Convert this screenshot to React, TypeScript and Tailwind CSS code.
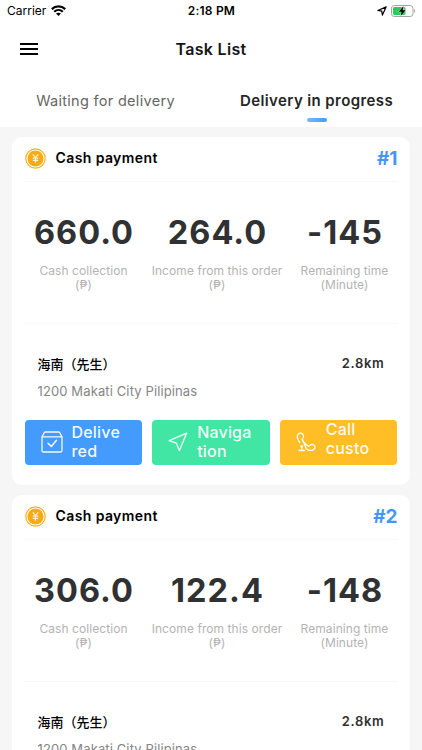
import type { ReactNode } from "react";

type Task = {
  id: number;
  collection: string;
  income: string;
  remaining: string;
};

const tasks: Task[] = [
  { id: 1, collection: "660.0", income: "264.0", remaining: "-145" },
  { id: 2, collection: "306.0", income: "122.4", remaining: "-148" },
];

function StatusBar() {
  return (
    <div className="grid h-[22px] grid-cols-3 items-center pl-[7px] pr-[6px] text-[12px] leading-[22px] text-black">
      <div className="flex items-center gap-[5px]">
        <span>Carrier</span>
        <svg className="h-[11px] w-[15px] -translate-y-px" viewBox="0 0 15 11" fill="none" stroke="currentColor" strokeWidth="2.2">
          <path d="M0.8 4.1C4.6 0.4 10.4 0.4 14.2 4.1" />
          <path d="M3.2 6.7C5.7 4.4 9.3 4.4 11.8 6.7" />
          <path d="M7.5 11L5 8.6C6.4 7.4 8.6 7.4 10 8.6Z" fill="currentColor" stroke="none" />
        </svg>
      </div>
      <span className="text-center font-semibold tracking-[0.2px]">2:18 PM</span>
      <div className="flex items-center justify-end gap-1">
        <svg className="h-[10px] w-[10px]" viewBox="0 0 10 10" fill="none" stroke="currentColor" strokeWidth="1.2" strokeLinejoin="round">
          <path d="M9.1 0.9L0.9 4.5L4.8 5.2L5.4 9.1Z" />
        </svg>
        <svg className="h-[12px] w-[25px]" viewBox="0 0 25 12" fill="none">
          <rect x="0.5" y="0.5" width="21.5" height="11" rx="2.8" stroke="#a3a3a3" />
          <rect x="2" y="2" width="12.5" height="8" rx="1.5" fill="#35c759" />
          <path d="M23.2 4V8C24.6 7.4 24.6 4.6 23.2 4Z" fill="#a3a3a3" />
          <path d="M12.6 1.1L7.6 6.7H10.6L9.6 10.9L14.7 5.2H11.6Z" fill="#000" stroke="#fff" strokeWidth="0.8" paintOrder="stroke" />
        </svg>
      </div>
    </div>
  );
}

function CoinIcon() {
  return (
    <svg className="h-[21px] w-[21px]" viewBox="0 0 21 21" fill="none">
      <circle cx="10.5" cy="10.5" r="9.7" stroke="#fbb01c" strokeWidth="1.2" />
      <circle cx="10.5" cy="10.5" r="8" fill="#fbab12" />
      <path d="M7.8 6.3L10.5 9.6L13.2 6.3M10.5 9.6V14.8M7.8 10.2H13.2M7.8 12.3H13.2" stroke="#fff3d6" strokeWidth="1.2" />
    </svg>
  );
}

function BoxIcon() {
  return (
    <svg className="h-[22px] w-[22px]" viewBox="0 0 22 22" fill="none" stroke="currentColor" strokeWidth="1.3" strokeLinecap="round" strokeLinejoin="round">
      <path d="M1 5.8L3.4 1.5Q3.7 1 4.3 1H17.7Q18.3 1 18.6 1.5L21 5.8V19.5Q21 21 19.5 21H2.5Q1 21 1 19.5ZM1 5.8H21" />
      <path d="M7 12.2L10.3 15.4L15.5 9.2" strokeWidth="1.5" />
    </svg>
  );
}

function NavigateIcon() {
  return (
    <svg className="h-[20px] w-[20px]" viewBox="0 0 20 20" fill="none" stroke="currentColor" strokeWidth="1.3" strokeLinejoin="round">
      <path d="M18.6 1.2L1.2 8.6L8.3 11.2L11.4 18.6Z" />
    </svg>
  );
}

function CallIcon() {
  return (
    <svg className="h-[20px] w-[20px]" viewBox="0 0 20 20" fill="none" stroke="currentColor" strokeWidth="1.3" strokeLinecap="round" strokeLinejoin="round">
      <path d="M6.3 7C8.6 5 7.4 1 4.6 1C1.7 1 0.8 3.9 1.5 6.2C1.9 7.8 2.7 9.2 3.7 10.6M10.3 17C14 19.6 18.8 18.4 19 15.2C19.1 12.4 15.4 11.6 13.8 13.6C12.9 14.7 12 14.1 10.5 12.7C8.2 10.6 5.2 8.2 6.3 7Z" />
      <path d="M3 18.5H8.4M5.7 18.3V15.4" />
      <circle cx="5.7" cy="14.4" r="1.3" fill="currentColor" stroke="none" />
    </svg>
  );
}

function Stat({ value, label, unit, className }: { value: string; label: string; unit: string; className: string }) {
  return (
    <div className={`flex flex-col items-center whitespace-nowrap ${className}`}>
      <span className="pl-px text-[32.5px] font-bold leading-10 tracking-[1px] text-[#303132]">{value}</span>
      <span className="mt-[11px] text-[12px] leading-[14px] tracking-[0.07px] text-[#b3b3b3]">{label}</span>
      <span className="text-[12px] leading-[14px] tracking-[0.07px] text-[#b3b3b3]">{unit}</span>
    </div>
  );
}

function ActionButton({ icon, className, children }: { icon: ReactNode; className: string; children: ReactNode }) {
  return (
    <button className={`flex h-[45px] items-center overflow-hidden rounded-[4px] text-left text-[16px] font-medium leading-[19.5px] tracking-[0.2px] text-white/95 ${className}`}>
      {icon}
      {children}
    </button>
  );
}

function TaskCard({ task }: { task: Task }) {
  return (
    <article className="h-[348px] shrink-0 rounded-[10px] bg-white px-[12.5px]">
      <header className="flex h-[44.5px] items-center border-b border-[#f8f8f8]">
        <CoinIcon />
        <h2 className="ml-[10px] -translate-y-px text-[14px] font-semibold tracking-[0.4px] text-black">Cash payment</h2>
        <span className="ml-auto text-[19px] font-bold text-[#4597f7]">#{task.id}</span>
      </header>
      <div className="flex h-[142px] border-b border-[#f8f8f8] pt-[31px]">
        <Stat value={task.collection} label="Cash collection" unit="(₱)" className="w-[118px]" />
        <Stat value={task.income} label="Income from this order" unit="(₱)" className="w-[149px]" />
        <Stat value={task.remaining} label="Remaining time" unit="(Minute)" className="w-[106px]" />
      </div>
      <div className="flex h-[96px] justify-between px-[13px] pt-[30px]">
        <div>
          <p className="text-[13px] font-medium leading-5 text-black">海南（先生）</p>
          <p className="mt-[7px] text-[13px] leading-5 tracking-[0.12px] text-[#858585]">1200 Makati City Pilipinas</p>
        </div>
        <span className="text-[13px] font-semibold leading-[19px] tracking-[0.7px] text-[#303132]">2.8km</span>
      </div>
      <div className="grid grid-cols-3 gap-[10px]">
        <ActionButton icon={<BoxIcon />} className="gap-[9px] bg-[#439bfd] pl-4">
          <span>Delive<br />red</span>
        </ActionButton>
        <ActionButton icon={<NavigateIcon />} className="gap-[9px] bg-[#42e6a4] pl-4">
          <span>Naviga<br />tion</span>
        </ActionButton>
        <ActionButton icon={<CallIcon />} className="gap-[10px] bg-[#ffbe26] pl-4">
          <span className="-mt-1.5">Call<br />custo</span>
        </ActionButton>
      </div>
    </article>
  );
}

export default function App() {
  return (
    <div className="flex h-[750px] w-[422px] flex-col overflow-hidden bg-[#f6f6f6] font-['Inter','Noto_Sans_CJK_SC',sans-serif]">
      <div className="h-[127px] shrink-0 bg-white">
        <StatusBar />
        <header className="grid h-[54px] grid-cols-3 items-center px-5">
          <button aria-label="Menu" className="flex w-[18px] flex-col gap-[3px]">
            <span className="h-[2px] bg-black" />
            <span className="h-[2px] bg-black" />
            <span className="h-[2px] bg-black" />
          </button>
          <h1 className="text-center text-[16px] font-semibold tracking-[0.3px] text-[#161616]">Task List</h1>
        </header>
        <nav className="grid h-[51px] grid-cols-2">
          <button className="flex flex-col items-center pt-[15px] text-[14.5px] leading-5 tracking-[0.3px] text-[#666]">
            Waiting for delivery
          </button>
          <button className="flex flex-col items-center pt-[15px] text-[15px] font-semibold leading-5 tracking-[0.4px] text-[#252525]">
            Delivery in progress
            <span className="mt-[6.5px] h-[4px] w-5 rounded-full bg-linear-to-r from-[#7bb8f7] to-[#439af8]" />
          </button>
        </nav>
      </div>
      <main className="flex flex-col gap-[10px] px-3 pt-[10px]">
        {tasks.map((task) => (
          <TaskCard key={task.id} task={task} />
        ))}
      </main>
    </div>
  );
}
